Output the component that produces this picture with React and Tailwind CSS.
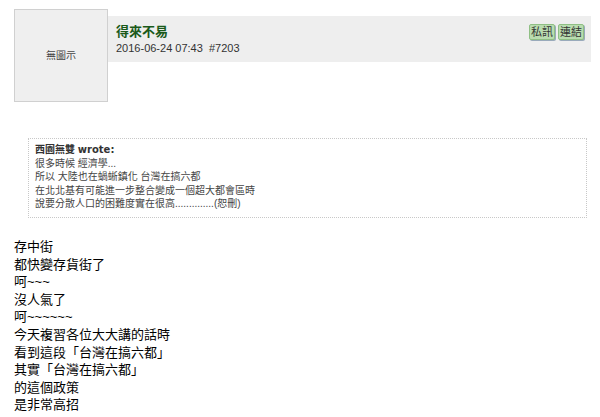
import React from "react";

const lines = [
  "存中街",
  "都快變存貨街了",
  "呵~~~",
  "沒人氣了",
  "呵~~~~~~",
  "今天複習各位大大講的話時",
  "看到這段「台灣在搞六都」",
  "其實「台灣在搞六都」",
  "的這個政策",
  "是非常高招",
];

const quote = [
  "很多時候 經濟學...",
  "所以 大陸也在蝸蜥鎮化 台灣在搞六都",
  "在北北基有可能進一步整合變成一個超大都會區時",
  "說要分散人口的困難度實在很高..............(恕刪)",
];

const Btn = ({ children }) => (
  <span className="inline-block h-[16px] px-[1px] leading-[14px] text-[11px] text-[#333] bg-[#b9dcb0] border border-[#8fbf84] rounded-[2px] shadow-[1px_1px_0_#9ab]">
    {children}
  </span>
);

export default function App() {
  const font = { fontFamily: '"Liberation Sans", "Noto Sans CJK TC", sans-serif' };
  return (
    <div className="w-[600px] h-[417px] bg-white overflow-hidden" style={font}>
      <div className="flex pt-[9px] pl-[14px] pr-[9px]">
        <div className="w-[94px] h-[93px] shrink-0 bg-[#efefef] border border-[#d0d0d0] flex items-center justify-center text-[10px] text-[#444]">
          無圖示
        </div>
        <div className="flex-1 mt-[7px] h-[46px] bg-[#eeeeee] flex justify-between pl-[8px] pr-[7px]">
          <div className="pt-[8px]">
            <div className="text-[13px] leading-[15px] font-semibold text-[#1a5a1a]">得來不易</div>
            <div className="mt-[2px] text-[11px] leading-[14px] text-[#333]">2016-06-24 07:43&nbsp;&nbsp;#7203</div>
          </div>
          <div className="flex gap-[3px] pt-[8px]">
            <Btn>私訊</Btn>
            <Btn>連結</Btn>
          </div>
        </div>
      </div>

      <div className="ml-[28px] mr-[13px] mt-[36px] h-[80px] border border-dotted border-[#c8c8c8] px-[6px] pt-[4px] text-[10px] leading-[13.6px] text-[#444]">
        <div className="font-bold text-[#333]">
          西園無雙 <span style={{ fontFamily: '"DejaVu Sans", sans-serif' }}>wrote:</span>
        </div>
        {quote.map((q) => (
          <div key={q}>{q}</div>
        ))}
      </div>

      <div className="pl-[14px] mt-[20px] text-[13px] leading-[17.6px] text-black">
        {lines.map((l, i) => (
          <div key={i}>{l}</div>
        ))}
      </div>
    </div>
  );
}
